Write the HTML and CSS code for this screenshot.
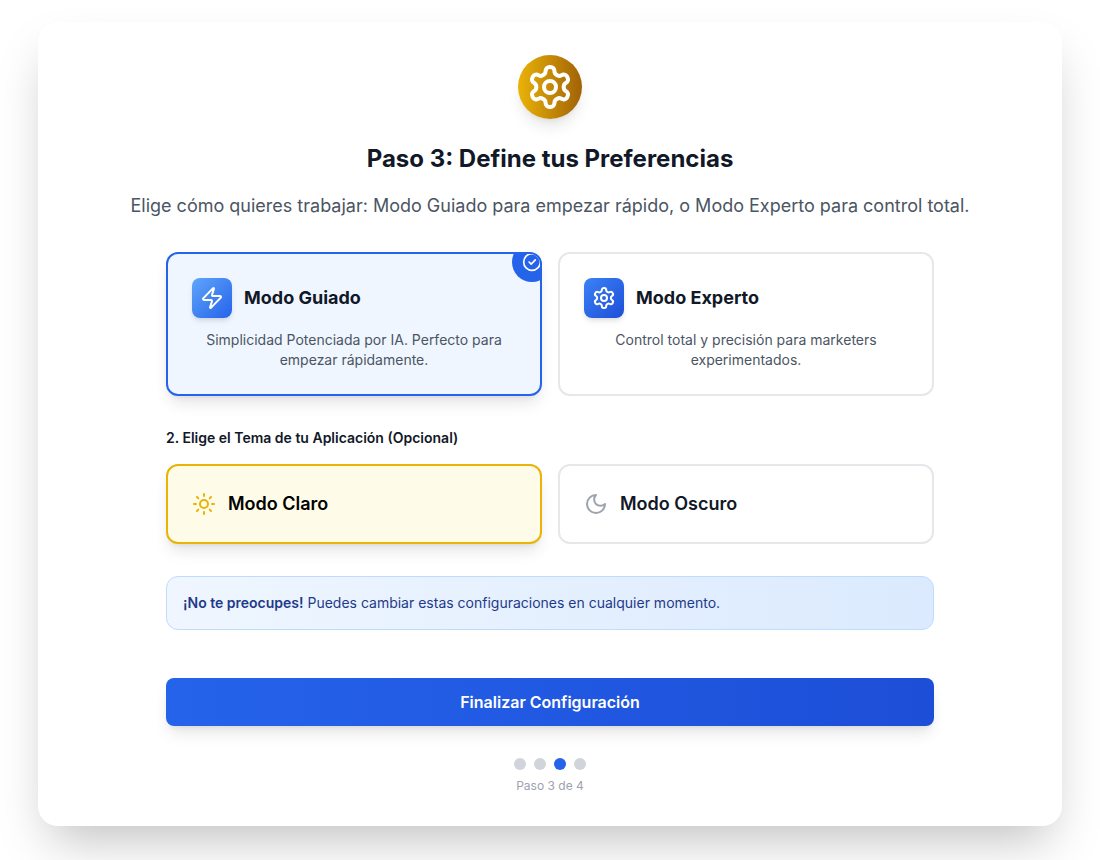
FILE: index.html
```html
<!DOCTYPE html>
<html lang="es">
<head>
  <meta charset="UTF-8" />
  <title>Paso 3: Define tus Preferencias</title>
  <link rel="stylesheet" href="styles.css">
</head>
<body>
  <div class="card">
    <div class="step-icon">
      <svg width="48" height="48" viewBox="0 0 24 24" fill="none" stroke="#fff" stroke-width="2" stroke-linecap="round" stroke-linejoin="round"><path d="M12.22 2h-.44a2 2 0 0 0-2 2v.18a2 2 0 0 1-1 1.73l-.43.25a2 2 0 0 1-2 0l-.15-.08a2 2 0 0 0-2.73.73l-.22.38a2 2 0 0 0 .73 2.73l.15.1a2 2 0 0 1 1 1.72v.51a2 2 0 0 1-1 1.74l-.15.09a2 2 0 0 0-.73 2.73l.22.38a2 2 0 0 0 2.73.73l.15-.08a2 2 0 0 1 2 0l.43.25a2 2 0 0 1 1 1.73V20a2 2 0 0 0 2 2h.44a2 2 0 0 0 2-2v-.18a2 2 0 0 1 1-1.73l.43-.25a2 2 0 0 1 2 0l.15.08a2 2 0 0 0 2.73-.73l.22-.39a2 2 0 0 0-.73-2.73l-.15-.08a2 2 0 0 1-1-1.74v-.5a2 2 0 0 1 1-1.74l.15-.09a2 2 0 0 0 .73-2.73l-.22-.38a2 2 0 0 0-2.73-.73l-.15.08a2 2 0 0 1-2 0l-.43-.25a2 2 0 0 1-1-1.73V4a2 2 0 0 0-2-2z"/><circle cx="12" cy="12" r="3"/></svg>
    </div>
    <h1>Paso 3: Define tus Preferencias</h1>
    <p class="subtitle">Elige cómo quieres trabajar: Modo Guiado para empezar rápido, o Modo Experto para control total.</p>

    <div class="content">
      <div class="option-row">
        <div class="option selected">
          <div class="check-badge">
            <svg width="20" height="20" viewBox="0 0 24 24" fill="none" stroke="#fff" stroke-width="2" stroke-linecap="round" stroke-linejoin="round"><circle cx="12" cy="12" r="10"/><path d="m8.5 12 2.5 2.5 5-5"/></svg>
          </div>
          <div class="option-head">
            <div class="option-icon light-blue">
              <svg width="24" height="24" viewBox="0 0 24 24" fill="none" stroke="#fff" stroke-width="2" stroke-linecap="round" stroke-linejoin="round"><path d="M4 14a1 1 0 0 1-.78-1.63l9.9-10.2a.5.5 0 0 1 .86.46l-1.92 6.02A1 1 0 0 0 13 10h7a1 1 0 0 1 .78 1.63l-9.9 10.2a.5.5 0 0 1-.86-.46l1.92-6.02A1 1 0 0 0 11 14z"/></svg>
            </div>
            <h3>Modo Guiado</h3>
          </div>
          <p>Simplicidad Potenciada por IA. Perfecto para empezar rápidamente.</p>
        </div>
        <div class="option">
          <div class="option-head">
            <div class="option-icon dark-blue">
              <svg width="24" height="24" viewBox="0 0 24 24" fill="none" stroke="#fff" stroke-width="2" stroke-linecap="round" stroke-linejoin="round"><path d="M12.22 2h-.44a2 2 0 0 0-2 2v.18a2 2 0 0 1-1 1.73l-.43.25a2 2 0 0 1-2 0l-.15-.08a2 2 0 0 0-2.73.73l-.22.38a2 2 0 0 0 .73 2.73l.15.1a2 2 0 0 1 1 1.72v.51a2 2 0 0 1-1 1.74l-.15.09a2 2 0 0 0-.73 2.73l.22.38a2 2 0 0 0 2.73.73l.15-.08a2 2 0 0 1 2 0l.43.25a2 2 0 0 1 1 1.73V20a2 2 0 0 0 2 2h.44a2 2 0 0 0 2-2v-.18a2 2 0 0 1 1-1.73l.43-.25a2 2 0 0 1 2 0l.15.08a2 2 0 0 0 2.73-.73l.22-.39a2 2 0 0 0-.73-2.73l-.15-.08a2 2 0 0 1-1-1.74v-.5a2 2 0 0 1 1-1.74l.15-.09a2 2 0 0 0 .73-2.73l-.22-.38a2 2 0 0 0-2.73-.73l-.15.08a2 2 0 0 1-2 0l-.43-.25a2 2 0 0 1-1-1.73V4a2 2 0 0 0-2-2z"/><circle cx="12" cy="12" r="3"/></svg>
            </div>
            <h3>Modo Experto</h3>
          </div>
          <p>Control total y precisión para marketers experimentados.</p>
        </div>
      </div>

      <label class="theme-label">2. Elige el Tema de tu Aplicación (Opcional)</label>
      <div class="option-row">
        <div class="theme-option theme-selected">
          <svg width="24" height="24" viewBox="0 0 24 24" fill="none" stroke="#eab308" stroke-width="2" stroke-linecap="round" stroke-linejoin="round"><circle cx="12" cy="12" r="4"/><path d="M12 2v2"/><path d="M12 20v2"/><path d="m4.93 4.93 1.41 1.41"/><path d="m17.66 17.66 1.41 1.41"/><path d="M2 12h2"/><path d="M20 12h2"/><path d="m6.34 17.66-1.41 1.41"/><path d="m19.07 4.93-1.41 1.41"/></svg>
          <span class="claro">Modo Claro</span>
        </div>
        <div class="theme-option">
          <svg width="24" height="24" viewBox="0 0 24 24" fill="none" stroke="#9ca3af" stroke-width="2" stroke-linecap="round" stroke-linejoin="round"><path d="M12 3a6 6 0 0 0 9 9 9 9 0 1 1-9-9Z"/></svg>
          <span>Modo Oscuro</span>
        </div>
      </div>

      <div class="notice"><strong>¡No te preocupes!</strong> Puedes cambiar estas configuraciones en cualquier momento.</div>

      <button class="finish-btn">Finalizar Configuración</button>

      <div class="dots">
        <span class="dot"></span>
        <span class="dot"></span>
        <span class="dot active"></span>
        <span class="dot"></span>
      </div>
      <p class="step-text">Paso 3 de 4</p>
    </div>
  </div>
</body>
</html>
```

FILE: styles.css
```css
* {
  box-sizing: border-box;
}

body {
  margin: 0;
  height: 860px;
  overflow: hidden;
  padding-top: 22px;
  background: #fff;
  font-family: Inter, sans-serif;
  color: #111827;
}

.card {
  width: 1024px;
  height: 804px;
  margin: 0 auto;
  padding-top: 33px;
  background: #fff;
  border-radius: 20px;
  box-shadow: 0 25px 50px -12px rgba(0,0,0,0.25);
}

.step-icon {
  width: 64px;
  height: 64px;
  margin: 0 auto;
  border-radius: 50%;
  background: linear-gradient(to right, #eab308, #a16207);
  box-shadow: 0 10px 15px -3px rgba(0,0,0,0.1), 0 4px 6px -4px rgba(0,0,0,0.1);
  display: flex;
  align-items: center;
  justify-content: center;
}

h1 {
  margin: 24px 0 0;
  font-size: 24px;
  line-height: 32px;
  font-weight: 700;
  text-align: center;
}

.subtitle {
  margin: 17px 0 0;
  font-size: 18px;
  line-height: 28px;
  color: #4b5563;
  text-align: center;
}

.content {
  width: 768px;
  margin: 32px auto 0;
}

.option-row {
  display: flex;
  gap: 16px;
}

.option {
  position: relative;
  overflow: hidden;
  flex: 1;
  height: 144px;
  padding: 24px;
  background: #fff;
  border: 2px solid #e5e7eb;
  border-radius: 12px;
}

.option.selected {
  background: #eff6ff;
  border-color: #2563eb;
  box-shadow: 0 10px 15px -3px rgba(0,0,0,0.1), 0 4px 6px -4px rgba(0,0,0,0.1);
}

.check-badge {
  position: absolute;
  top: -12px;
  right: -12px;
  width: 40px;
  height: 40px;
  border-radius: 50%;
  background: #2563eb;
  display: flex;
  align-items: center;
  justify-content: center;
}

.option-head {
  display: flex;
  align-items: center;
  gap: 12px;
}

.option-icon {
  width: 40px;
  height: 40px;
  border-radius: 8px;
  display: flex;
  align-items: center;
  justify-content: center;
  box-shadow: 0 4px 6px -1px rgba(0,0,0,0.1), 0 2px 4px -2px rgba(0,0,0,0.1);
}

.light-blue {
  background: linear-gradient(135deg, #60a5fa, #2563eb);
}

.dark-blue {
  background: linear-gradient(135deg, #3b82f6, #1d4ed8);
}

.option h3 {
  margin: 0;
  font-size: 18px;
  line-height: 28px;
  font-weight: 700;
}

.option p {
  margin: 12px 0 0;
  font-size: 14px;
  line-height: 20px;
  color: #4b5563;
  text-align: center;
}

.theme-label {
  display: block;
  margin: 32px 0 16px;
  font-size: 14px;
  line-height: 20px;
  font-weight: 600;
}

.theme-option {
  flex: 1;
  height: 80px;
  padding: 0 24px;
  display: flex;
  align-items: center;
  gap: 12px;
  background: #fff;
  border: 2px solid #e5e7eb;
  border-radius: 12px;
  font-size: 18px;
  line-height: 28px;
  font-weight: 600;
}

.theme-option.theme-selected {
  background: #fefce8;
  border-color: #eab308;
  box-shadow: 0 10px 15px -3px rgba(0,0,0,0.1), 0 4px 6px -4px rgba(0,0,0,0.1);
}

.claro {
  color: #000;
}

.notice {
  margin-top: 32px;
  padding: 16px;
  background: linear-gradient(to right, #eff6ff, #dbeafe);
  border: 1px solid #bfdbfe;
  border-radius: 12px;
  font-size: 14px;
  line-height: 20px;
  color: #1e3a8a;
}

.notice strong {
  font-weight: 600;
}

.finish-btn {
  display: block;
  width: 100%;
  height: 48px;
  margin-top: 48px;
  border: none;
  border-radius: 8px;
  background: linear-gradient(to right, #2563eb, #1d4ed8);
  box-shadow: 0 10px 15px -3px rgba(0,0,0,0.1), 0 4px 6px -4px rgba(0,0,0,0.1);
  color: #fff;
  font-family: Inter, sans-serif;
  font-size: 16px;
  font-weight: 600;
}

.dots {
  display: flex;
  justify-content: center;
  gap: 8px;
  margin-top: 32px;
}

.dot {
  width: 12px;
  height: 12px;
  border-radius: 50%;
  background: #d1d5db;
}

.dot.active {
  background: #2563eb;
}

.step-text {
  margin: 8px 0 0;
  font-size: 12px;
  line-height: 16px;
  color: #9ca3af;
  text-align: center;
}
```
